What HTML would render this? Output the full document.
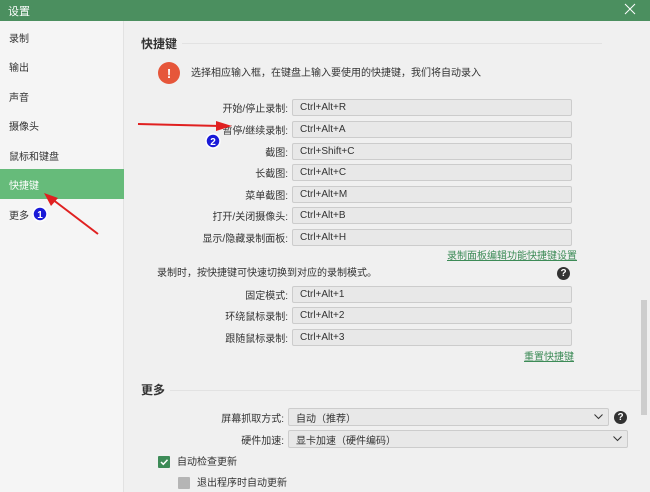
<!DOCTYPE html>
<html><head><meta charset="utf-8"><style>
*{margin:0;padding:0;box-sizing:border-box}
body{width:650px;height:492px;overflow:hidden;background:#f0f0f0;font-family:"Liberation Sans","Noto Sans CJK SC",sans-serif;font-size:10px;color:#333;position:relative}
.a{position:absolute;white-space:nowrap}
.title{left:0;top:0;width:650px;height:21px;background:#4b8f5f;color:#fff;font-size:11px;padding-left:8px;display:flex;align-items:center}
.side{left:0;top:21px;width:124px;height:471px;background:#f5f5f5;border-right:1px solid #e2e2e2}
.si{left:0;width:124px;height:30px;display:flex;align-items:center;padding-left:9px;font-size:10px;color:#333}
.lbl{width:150px;left:138px;height:17px;display:flex;align-items:center;justify-content:flex-end;font-size:10px}
.inp{left:292px;width:280px;height:17px;background:#e8e8e8;border:1px solid #ccc;border-radius:2px;padding-left:7px;display:flex;align-items:center;font-size:10px;color:#333}
.link{color:#3d8b57;text-decoration:underline;font-size:10px;line-height:12px}
.q{width:13px;height:13px;border-radius:50%;background:#333;color:#fff;font-weight:bold;font-size:10px;display:flex;align-items:center;justify-content:center}
.t{line-height:12px}
</style></head><body>
<div class="a title">设置</div>
<svg class="a" style="left:624px;top:3px" width="12" height="12"><path d="M1 1L11 11M11 1L1 11" stroke="#fff" stroke-width="1"/></svg>
<div class="a side"></div>
<div class="a si" style="top:22px">录制</div>
<div class="a si" style="top:51px">输出</div>
<div class="a si" style="top:81px">声音</div>
<div class="a si" style="top:110px">摄像头</div>
<div class="a si" style="top:140px">鼠标和键盘</div>
<div class="a si" style="top:169px;background:#66bb7a;color:#fff">快捷键</div>
<div class="a si" style="top:199px">更多</div>

<div class="a" style="left:141px;top:37px;font-size:12px;font-weight:bold;color:#333;line-height:14px">快捷键</div>
<div class="a" style="left:182px;top:43px;width:420px;height:1px;background:#e2e2e2"></div>
<div class="a" style="left:158px;top:62px;width:22px;height:22px;border-radius:50%;background:#e6563a;color:#fff;display:flex;align-items:center;justify-content:center;font-size:13px;font-weight:bold">!</div>
<div class="a t" style="left:191px;top:68px">选择相应输入框，在键盘上输入要使用的快捷键，我们将自动录入</div>

<div class="a lbl" style="top:99px">开始/停止录制:</div><div class="a inp" style="top:99px">Ctrl+Alt+R</div>
<div class="a lbl" style="top:121px">暂停/继续录制:</div><div class="a inp" style="top:121px">Ctrl+Alt+A</div>
<div class="a lbl" style="top:143px">截图:</div><div class="a inp" style="top:143px">Ctrl+Shift+C</div>
<div class="a lbl" style="top:164px">长截图:</div><div class="a inp" style="top:164px">Ctrl+Alt+C</div>
<div class="a lbl" style="top:186px">菜单截图:</div><div class="a inp" style="top:186px">Ctrl+Alt+M</div>
<div class="a lbl" style="top:207px">打开/关闭摄像头:</div><div class="a inp" style="top:207px">Ctrl+Alt+B</div>
<div class="a lbl" style="top:229px">显示/隐藏录制面板:</div><div class="a inp" style="top:229px">Ctrl+Alt+H</div>
<div class="a link" style="left:447px;top:251px">录制面板编辑功能快捷键设置</div>
<div class="a t" style="left:157px;top:268px">录制时，按快捷键可快速切换到对应的录制模式。</div>
<div class="a q" style="left:557px;top:267px">?</div>
<div class="a lbl" style="top:286px">固定模式:</div><div class="a inp" style="top:286px">Ctrl+Alt+1</div>
<div class="a lbl" style="top:307px">环绕鼠标录制:</div><div class="a inp" style="top:307px">Ctrl+Alt+2</div>
<div class="a lbl" style="top:329px">跟随鼠标录制:</div><div class="a inp" style="top:329px">Ctrl+Alt+3</div>
<div class="a link" style="left:524px;top:352px">重置快捷键</div>

<div class="a" style="left:141px;top:383px;font-size:12px;font-weight:bold;color:#333;line-height:14px">更多</div>
<div class="a" style="left:170px;top:390px;width:470px;height:1px;background:#e2e2e2"></div>
<div class="a lbl" style="left:134px;top:408px;height:18px">屏幕抓取方式:</div>
<div class="a inp" style="left:288px;top:408px;width:321px;height:18px">自动（推荐）</div>
<svg class="a" style="left:594px;top:414px" width="9" height="6"><path d="M0.5 0.5L4.5 4.5L8.5 0.5" stroke="#333" fill="none"/></svg>
<div class="a q" style="left:614px;top:411px">?</div>
<div class="a lbl" style="left:134px;top:430px;height:18px">硬件加速:</div>
<div class="a inp" style="left:288px;top:430px;width:340px;height:18px">显卡加速（硬件编码）</div>
<svg class="a" style="left:613px;top:436px" width="9" height="6"><path d="M0.5 0.5L4.5 4.5L8.5 0.5" stroke="#333" fill="none"/></svg>
<div class="a" style="left:158px;top:456px;width:12px;height:12px;background:#3d8b57;border-radius:1px"></div>
<svg class="a" style="left:158px;top:456px" width="12" height="12"><path d="M3 6L5.3 8.3L9.5 3.8" stroke="#fff" stroke-width="1.5" fill="none"/></svg>
<div class="a t" style="left:177px;top:457px">自动检查更新</div>
<div class="a" style="left:178px;top:477px;width:12px;height:12px;background:#b5b5b5;border-radius:1px"></div>
<div class="a t" style="left:197px;top:478px">退出程序时自动更新</div>

<div class="a" style="left:641px;top:300px;width:6px;height:115px;background:#cdcdcd"></div>

<svg class="a" style="left:0;top:0" width="650" height="492">
<path d="M138 124L220 126" stroke="#e02020" stroke-width="2"/>
<path d="M232 126L216 121L216 131Z" fill="#e02020"/>
<path d="M98 234L52 199" stroke="#e02020" stroke-width="2"/>
<path d="M44 193L58 198L51 206Z" fill="#e02020"/>
<circle cx="40" cy="214" r="7" fill="#1a1ad8" stroke="#fff" stroke-width="1.5"/>
<text x="40" y="218" font-size="10" font-weight="bold" fill="#fff" text-anchor="middle" font-family="Liberation Sans">1</text>
<circle cx="213" cy="141" r="7" fill="#1a1ad8" stroke="#fff" stroke-width="1.5"/>
<text x="213" y="145" font-size="10" font-weight="bold" fill="#fff" text-anchor="middle" font-family="Liberation Sans">2</text>
</svg>
</body></html>
